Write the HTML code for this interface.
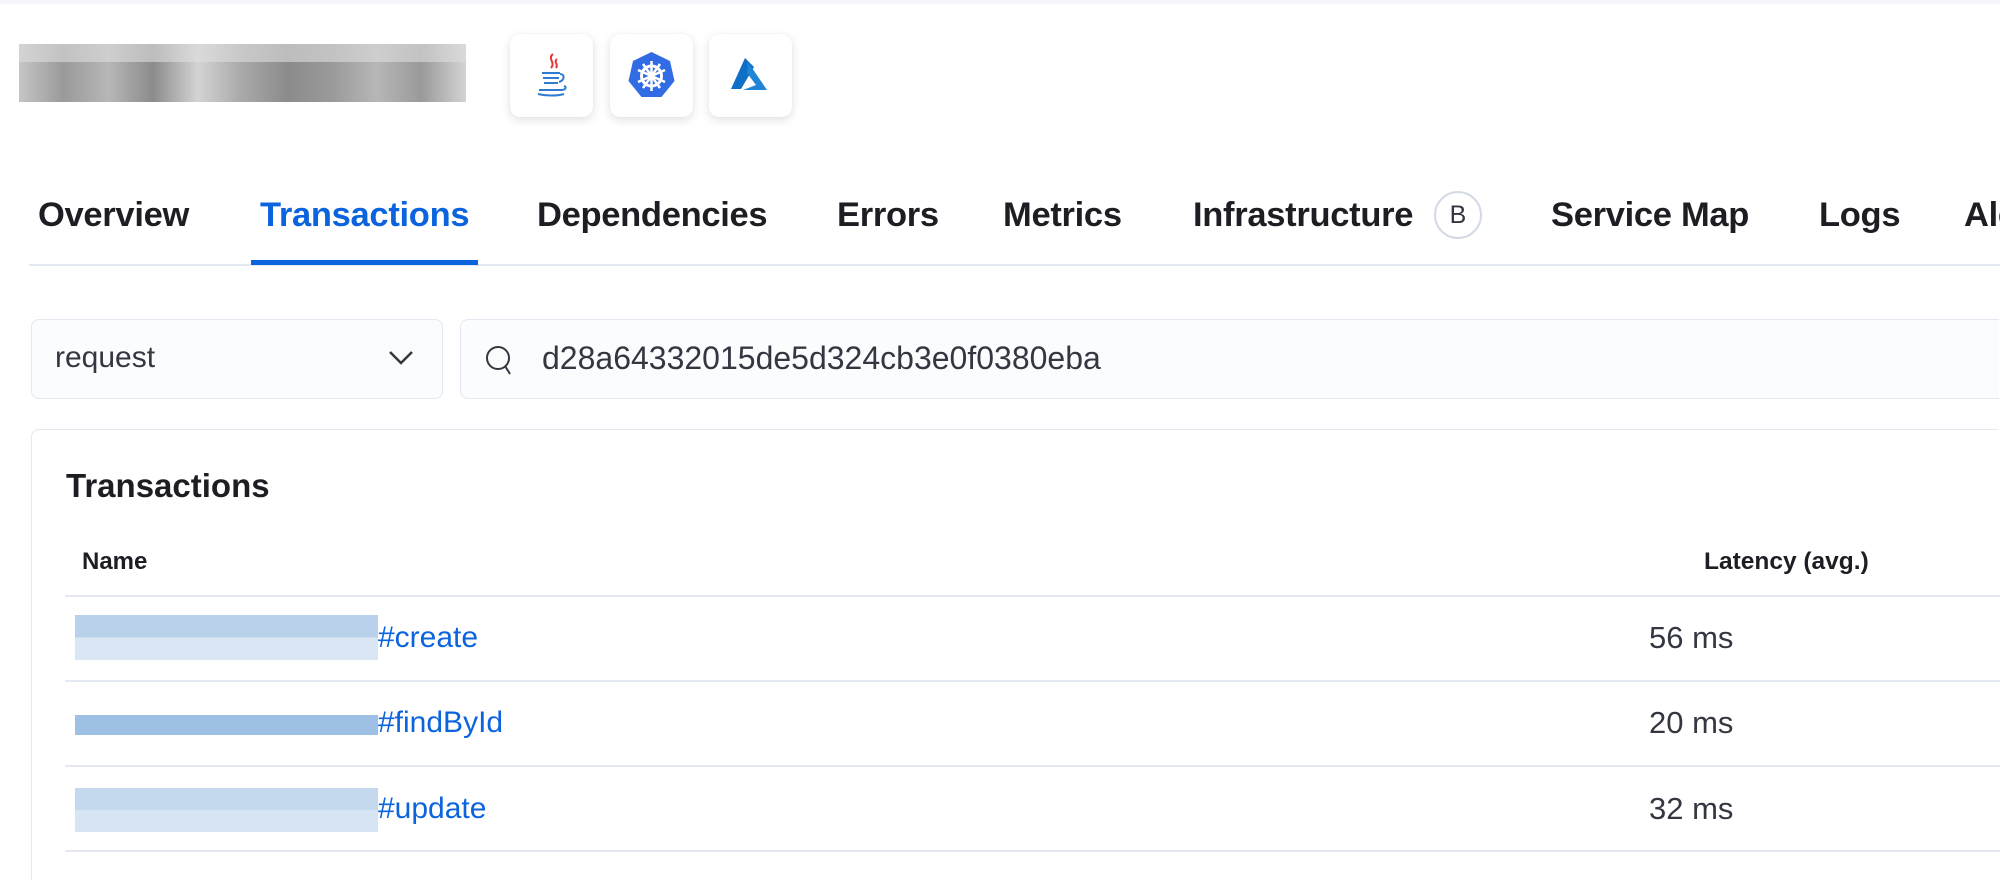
<!DOCTYPE html>
<html style="overflow:hidden;height:880px"><head><meta charset="utf-8"><style>
body{margin:0;width:2000px;height:880px;overflow:hidden;background:#fff;font-family:"Liberation Sans",sans-serif;color:#1d1e24;position:relative}
.a{position:absolute;white-space:nowrap}
.tab{position:absolute;top:196px;font-size:34.5px;font-weight:bold;color:#1d1e24;letter-spacing:-0.3px}
.icon{position:absolute;top:34px;width:83px;height:83px;background:#fff;border-radius:10px;box-shadow:0 3px 10px rgba(0,0,0,0.12),0 0 1px rgba(0,0,0,0.1)}
.icon svg{position:absolute;left:16px;top:16px}
.line{position:absolute;height:2px;background:#e3e8f2}
.link{color:#0b64dd;font-size:30px}
.ms{font-size:31px;color:#343741}
</style></head><body>
<div class="a" style="left:0;top:0;width:2000px;height:4px;background:#f5f7fa"></div>
<div class="a" style="left:19px;top:44px;width:447px;height:58px;background:linear-gradient(90deg,#bbb 0,#888 10%,#aaa 20%,#777 30%,#ccc 40%,#999 50%,#777 60%,#888 70%,#aaa 80%,#888 90%,#ccc 100%);opacity:.85"></div>
<div class="a" style="left:19px;top:44px;width:447px;height:18px;background:#ddd;opacity:.6"></div>
<div class="icon" style="left:510px"><svg width="51" height="51" viewBox="0 0 51 51">
<path d="M27 4c-6 5 3 8-2 14M31 9c-4 3 2 5-1 9" stroke="#e3342f" stroke-width="2" fill="none"/>
<path d="M16 23h18M17 28h16M18 33h14M13 40h22c5 0 6-3 3-4M12 44c8 2 20 2 26 0" stroke="#2e7bd1" stroke-width="2" fill="none"/>
<path d="M34 24c5 0 5 6-1 8" stroke="#2e7bd1" stroke-width="2" fill="none"/></svg></div>
<div class="icon" style="left:610px"><svg width="51" height="51" viewBox="0 0 51 51">
<polygon points="25.5,2 44,11 48.5,31 35.5,47 15.5,47 2.5,31 7,11" fill="#326ce5"/>
<circle cx="25.5" cy="26" r="10" stroke="#fff" stroke-width="3" fill="none"/>
<path d="M25.5 11v30M12 20l27 12M12 32l27-12M17 38l17-24M17 14l17 24" stroke="#fff" stroke-width="2.5"/>
<circle cx="25.5" cy="26" r="3" fill="#fff"/></svg></div>
<div class="icon" style="left:709px"><svg width="51" height="51" viewBox="0 0 51 51">
<path d="M20 8l-14 31h10l13-22z" fill="#0f6fc6"/><path d="M23 12l19 28H18l13-5-9-12z" fill="#1f83d6"/></svg></div>
<div class="tab" style="left:38px">Overview</div>
<div class="tab" style="left:260px;color:#0b64dd">Transactions</div>
<div class="tab" style="left:537px">Dependencies</div>
<div class="tab" style="left:837px">Errors</div>
<div class="tab" style="left:1003px">Metrics</div>
<div class="tab" style="left:1193px">Infrastructure</div>
<div class="a" style="left:1434px;top:191px;width:44px;height:44px;border:2px solid #d3dae6;border-radius:50%;text-align:center;line-height:44px;font-size:25px;color:#343741">B</div>
<div class="tab" style="left:1551px">Service Map</div>
<div class="tab" style="left:1819px">Logs</div>
<div class="tab" style="left:1964px;width:36px;overflow:hidden">Alerts</div>
<div class="line" style="left:29px;top:264px;width:1971px"></div>
<div class="a" style="left:251px;top:260px;width:227px;height:5px;background:#0b64dd"></div>
<div class="a" style="left:31px;top:319px;width:410px;height:78px;border:1.5px solid #e3e8f2;border-radius:8px;background:#fbfcfd"></div>
<div class="a" style="left:55px;top:341px;font-size:30px;color:#343741">request</div>
<svg class="a" style="left:388px;top:349px" width="26" height="18" viewBox="0 0 26 18"><path d="M2 3l11 11 11-11" stroke="#343741" stroke-width="2.5" fill="none"/></svg>
<div class="a" style="left:460px;top:319px;width:1538px;height:78px;border:1.5px solid #e3e8f2;border-right:none;border-radius:8px 0 0 8px;background:#fbfcfd"></div>
<svg class="a" style="left:484px;top:344px" width="34" height="34" viewBox="0 0 34 34"><circle cx="14" cy="14" r="11" stroke="#343741" stroke-width="2" fill="none"/><path d="M21 22l5 8" stroke="#343741" stroke-width="2"/></svg>
<div class="a" style="left:542px;top:340px;font-size:32px;color:#343741">d28a64332015de5d324cb3e0f0380eba</div>
<div class="a" style="left:31px;top:429px;width:1967px;height:451px;border:1.5px solid #e3e8f2;border-right:none;border-bottom:none;border-radius:8px 0 0 0;background:#fff;box-sizing:border-box"></div>
<div class="a" style="left:66px;top:467px;font-size:33px;font-weight:bold">Transactions</div>
<div class="a" style="left:82px;top:548px;font-size:24px;font-weight:bold">Name</div>
<div class="a" style="left:1704px;top:548px;font-size:24.5px;font-weight:bold">Latency (avg.)</div>
<div class="line" style="left:65px;top:595px;width:1935px"></div>
<div class="line" style="left:65px;top:680px;width:1935px"></div>
<div class="line" style="left:65px;top:765px;width:1935px"></div>
<div class="line" style="left:65px;top:850px;width:1935px"></div>
<div class="a" style="left:75px;top:615px;width:303px;height:45px;background:linear-gradient(180deg,#b9d1ea 50%,#dae6f3 50%)"></div>
<div class="a link" style="left:378px;top:621px">#create</div>
<div class="a" style="left:75px;top:715px;width:303px;height:20px;background:#9dc0e4"></div>
<div class="a link" style="left:378px;top:706px">#findById</div>
<div class="a" style="left:75px;top:788px;width:303px;height:44px;background:linear-gradient(180deg,#c4d9ee 50%,#d6e4f3 50%)"></div>
<div class="a link" style="left:378px;top:792px">#update</div>
<div class="a ms" style="left:1649px;top:620px">56 ms</div>
<div class="a ms" style="left:1649px;top:705px">20 ms</div>
<div class="a ms" style="left:1649px;top:791px">32 ms</div>
</body></html>
